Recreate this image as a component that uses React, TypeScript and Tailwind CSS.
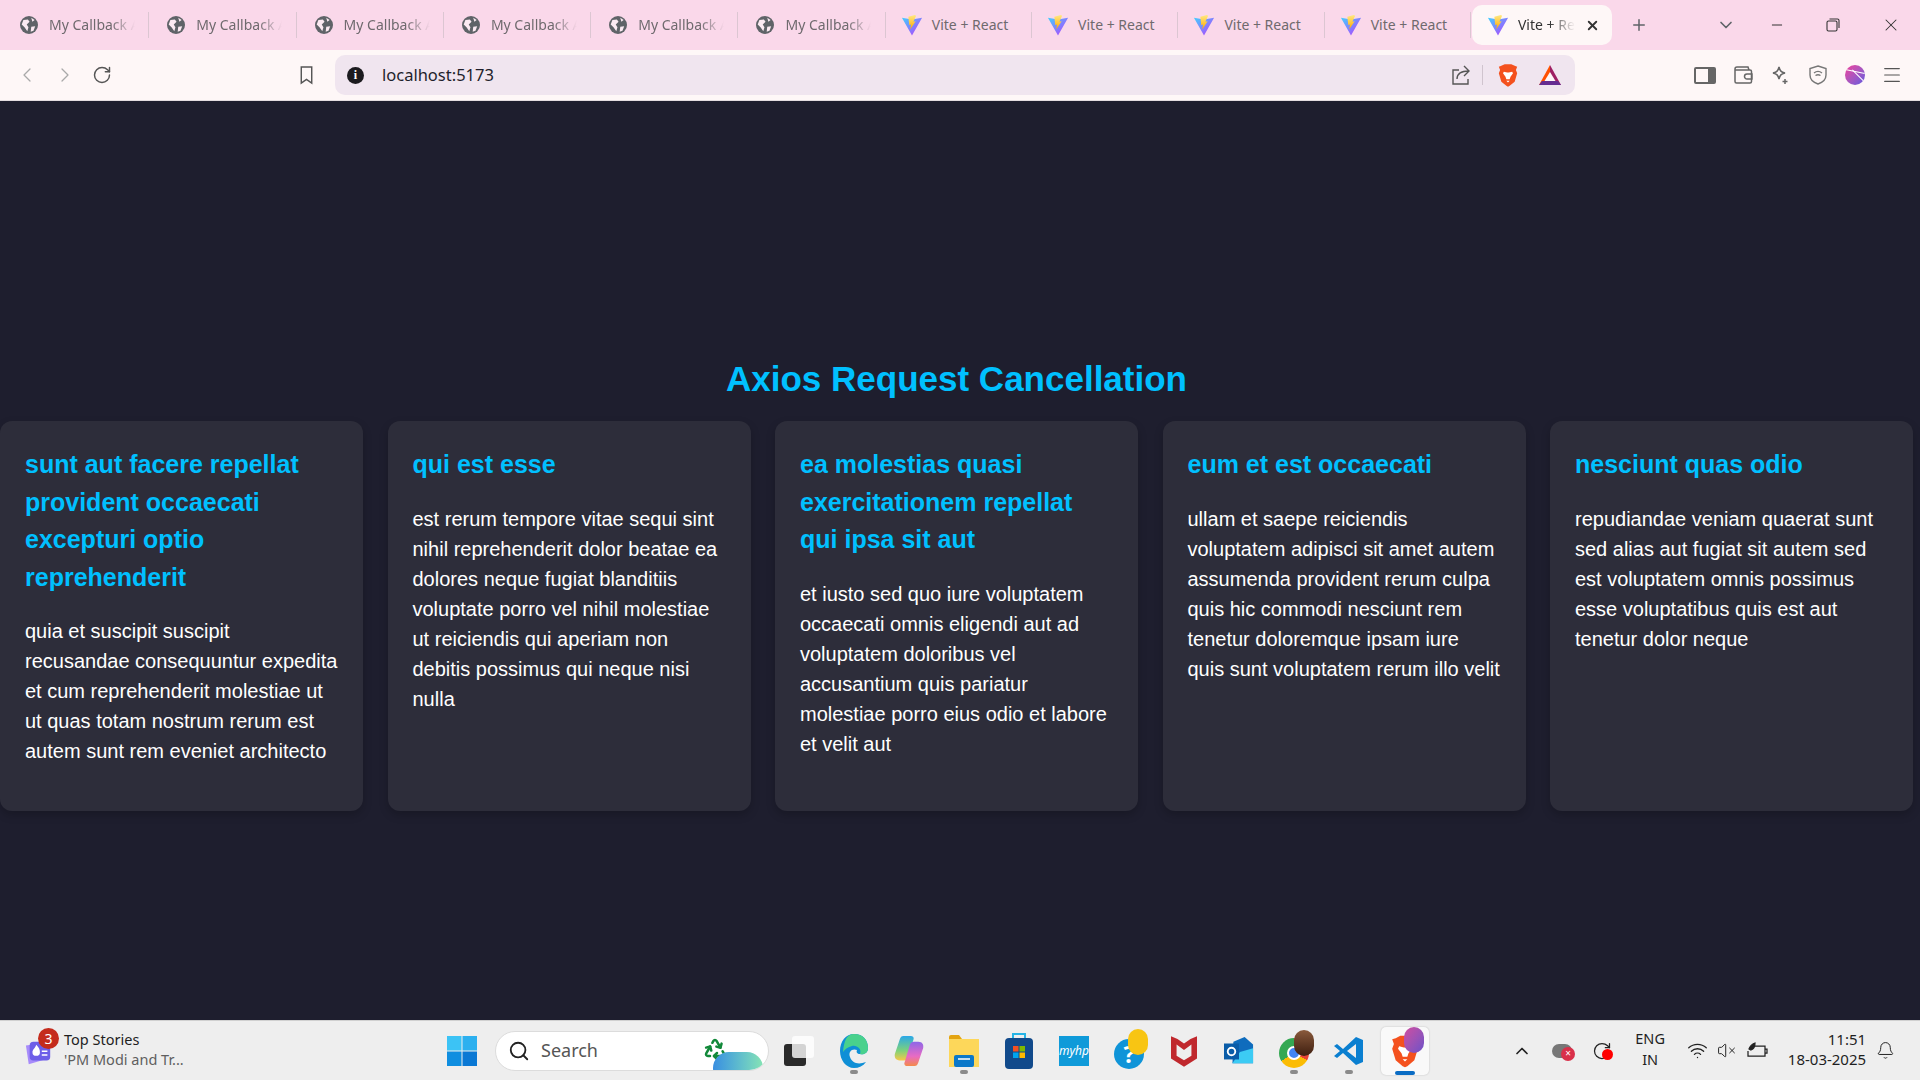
import { Bell, ChevronDown, ChevronLeft, ChevronRight, ChevronUp, Menu, Minus, Plus, Recycle, RotateCw, Search, VolumeX, Wifi, X } from "lucide-react";

const posts = [
  {
    title: "sunt aut facere repellat provident occaecati excepturi optio reprehenderit",
    body: "quia et suscipit suscipit recusandae consequuntur expedita et cum reprehenderit molestiae ut ut quas totam nostrum rerum est autem sunt rem eveniet architecto",
  },
  {
    title: "qui est esse",
    body: "est rerum tempore vitae sequi sint nihil reprehenderit dolor beatae ea dolores neque fugiat blanditiis voluptate porro vel nihil molestiae ut reiciendis qui aperiam non debitis possimus qui neque nisi nulla",
  },
  {
    title: "ea molestias quasi exercitationem repellat qui ipsa sit aut",
    body: "et iusto sed quo iure voluptatem occaecati omnis eligendi aut ad voluptatem doloribus vel accusantium quis pariatur molestiae porro eius odio et labore et velit aut",
  },
  {
    title: "eum et est occaecati",
    body: "ullam et saepe reiciendis voluptatem adipisci sit amet autem assumenda provident rerum culpa quis hic commodi nesciunt rem tenetur doloremque ipsam iure quis sunt voluptatem rerum illo velit",
  },
  {
    title: "nesciunt quas odio",
    body: "repudiandae veniam quaerat sunt sed alias aut fugiat sit autem sed est voluptatem omnis possimus esse voluptatibus quis est aut tenetur dolor neque",
  },
];

function GlobeIcon() {
  return (
    <svg viewBox="0 0 16 16" className="w-[18px] h-[18px] shrink-0">
      <circle cx="8" cy="8" r="8" fill="#5f6368" />
      <path d="M3 3.5 7 3l1.5 2L6 7.5l1.5 2.5-1 3.5L4 10 1.5 7.5ZM10 9.5l3.5-.5-1.5 4-2.500 1ZM10 1.500l3 2-2 1.500Z" fill="#fbeaf2" />
    </svg>
  );
}

function ViteIcon() {
  return (
    <svg viewBox="0 0 24 24" className="w-[22px] h-[22px] shrink-0">
      <defs>
        <linearGradient id="viteBody" x1="0" y1="0" x2="1" y2="1">
          <stop offset="0" stopColor="#41d1ff" />
          <stop offset="1" stopColor="#bd34fe" />
        </linearGradient>
        <linearGradient id="viteBolt" x1="0" y1="0" x2="0" y2="1">
          <stop offset="0" stopColor="#ffea83" />
          <stop offset="1" stopColor="#ffa800" />
        </linearGradient>
      </defs>
      <path d="M1 4 12 6l11-2-11 19.500Z" fill="url(#viteBody)" />
      <path d="M15 1 8 3l1 9 2-.5-1 5.500 6-9-2.500.5L16.500 2Z" fill="url(#viteBolt)" />
    </svg>
  );
}

function Tab({ label, icon }: { label: string; icon: "globe" | "vite" }) {
  return (
    <div className={`flex items-center h-[26px] border-r border-[#dcc6d2] overflow-hidden ${icon === "globe" ? "w-[147.300px] pl-[18px] gap-[11px]" : "w-[146.300px] pl-[15px] gap-[9px]"}`}>
      {icon === "globe" ? <GlobeIcon /> : <ViteIcon />}
      <span className={`-mt-[2px] text-[14px] text-[#6f6a6e] whitespace-nowrap ${icon === "globe" ? "w-[86px] overflow-hidden [mask-image:linear-gradient(to_right,black_72%,transparent)]" : ""}`}>{label}</span>
    </div>
  );
}

function BraveIcon({ size }: { size: string }) {
  return (
    <svg viewBox="0 0 24 28" className={size}>
      <path d="M4 3 8 1h8l4 2 3 1-1.500 4L23 12l-3 10-6 5-2 1-2-1-6-5L1 12l1.500-4L1 4Z" fill="#f4511e" />
      <path d="M7 10l4 1h2l4-1 1 2-3 4-1 3h-4l-1-3-3-4ZM10 21h4l-2 2Z" fill="#fff" />
    </svg>
  );
}

function BatIcon() {
  return (
    <svg viewBox="0 0 24 22" className="w-[24px] h-[22px]">
      <path d="M12 1 23 21h-7l-4-7Z" fill="#9e1f63" />
      <path d="M12 1 1 21h7l4-7Z" fill="#ff5000" />
      <path d="M1 21h22l-3-4H4Z" fill="#662d91" />
      <path d="M12 8 6.500 17h11Z" fill="#fef7f7" />
    </svg>
  );
}

function ChromeBar() {
  return (
    <div className="shrink-0">
      <div className="h-[50px] bg-[#fad8ea] flex items-center pl-[2px]">
        {[0, 1, 2, 3, 4, 5].map((i) => (
          <Tab key={i} label="My Callback App" icon="globe" />
        ))}
        {[0, 1, 2, 3].map((i) => (
          <Tab key={i} label="Vite + React" icon="vite" />
        ))}
        <div className="ml-[1px] w-[140px] h-[40px] bg-[#fef7f7] rounded-[10px] flex items-center pl-[15px]">
          <ViteIcon />
          <span className="-mt-[2px] ml-[9px] text-[14px] text-[#333] whitespace-nowrap w-[57px] overflow-hidden [mask-image:linear-gradient(to_right,black_55%,transparent)]">Vite + React</span>
          <X size={15} strokeWidth={3} className="ml-[10px] shrink-0 text-[#333]" />
        </div>
        <Plus size={18} strokeWidth={2} className="ml-[18px] text-[#5f6368]" />
        <ChevronDown size={20} className="ml-[68px] text-[#5f6368]" />
        <Minus size={16} strokeWidth={1.500} className="ml-[33px] text-[#333]" />
        <svg viewBox="0 0 14 14" className="ml-[41px] w-[14px] h-[14px] text-[#333]" fill="none" stroke="currentColor" strokeWidth="1.100">
          <rect x="1" y="3" width="10" height="10" rx="1.500" />
          <path d="M3.500 1H11.500a1.500 1.500 0 0 1 1.500 1.500V10" />
        </svg>
        <X size={20} strokeWidth={1.250} className="ml-[41px] text-[#333]" />
      </div>
      <div className="h-[51px] bg-[#fef7f7] border-b border-[#e4dde0] flex items-center">
        <ChevronLeft size={24} strokeWidth={1.250} className="ml-[15px] text-[#a9a9a9]" />
        <ChevronRight size={24} strokeWidth={1.250} className="ml-[14px] text-[#a9a9a9]" />
        <RotateCw size={20} strokeWidth={1.750} className="ml-[15px] text-[#555]" />
        <svg viewBox="0 0 14 20" className="ml-[187px] w-[15px] h-[19px] text-[#555]" fill="none" stroke="currentColor" strokeWidth="1.500">
          <path d="M1.500 1h11v17L7 14l-5.500 4Z" />
        </svg>
        <div className="ml-[21px] w-[1240px] h-[40px] bg-[#f0e5ef] rounded-[10px] flex items-center pl-[12px] pr-[13px]">
          <div className="w-[17px] h-[17px] shrink-0 rounded-full bg-[#1c1b1f] text-white text-[12px] font-bold flex items-center justify-center font-['Liberation_Serif',serif]">i</div>
          <span className="ml-[18px] flex-1 text-[16.500px] text-[#1f1f2b]">localhost:5173</span>
          <svg viewBox="0 0 20 20" className="w-[20px] h-[22px] shrink-0 text-[#555]" fill="none" stroke="currentColor" strokeWidth="1.400">
            <path d="M8 5H2v14h15v-5M6 14c0-5 4-8 12-8M13 1l5 5-5 5" />
          </svg>
          <div className="ml-[11px] w-px h-[20px] bg-[#d0c4ce]" />
          <div className="ml-[15px]">
            <BraveIcon size="w-[20px] h-[24px]" />
          </div>
          <div className="ml-[20px]">
            <BatIcon />
          </div>
        </div>
        <div className="ml-[119px] w-[22px] h-[17px] border-2 border-[#666] rounded-[2px] flex justify-end">
          <div className="w-[6px] bg-[#666]" />
        </div>
        <svg viewBox="0 0 20 18" className="ml-[17px] w-[20px] h-[18px] text-[#666]" fill="none" stroke="currentColor" strokeWidth="1.500">
          <path d="M2 4V3a2 2 0 0 1 2-2h11l1 3M2 4h15a1.500 1.500 0 0 1 1.500 1.500v10a1.500 1.500 0 0 1-1.500 1.500H3.500A1.500 1.500 0 0 1 2 15.500ZM19 8h-5a2 2 0 0 0 0 5h5Z" />
        </svg>
        <svg viewBox="0 0 20 20" className="ml-[17px] w-[20px] h-[20px] text-[#666]" fill="none" stroke="currentColor" strokeWidth="1.500">
          <path d="M9 2c1 4 2 5 6 6-4 1-5 2-6 6-1-4-2-5-6-6 4-1 5-2 6-6Z" />
          <path d="M15 14v5M12.500 16.500h5" />
        </svg>
        <svg viewBox="0 0 18 20" className="ml-[19px] w-[18px] h-[20px] text-[#777]" fill="none" stroke="currentColor" strokeWidth="1.400">
          <path d="M9 1 17 3.500V10c0 4.500-3.500 7.500-8 9-4.500-1.500-8-4.500-8-9V3.500Z" />
          <path d="M5 8c2.500-2 5.500-2 8 0M6.500 10.500c1.500-1 3.500-1 5 0M9 13h.01" />
        </svg>
        <div className="ml-[18px] w-[20px] h-[20px] rounded-full bg-gradient-to-br from-[#f0379a] to-[#5f56e0] relative overflow-hidden">
          <div className="absolute left-0 top-[6px] w-[20px] h-px bg-white rotate-12" />
          <div className="absolute left-[5px] top-[10px] w-[16px] h-px bg-white rotate-45" />
        </div>
        <Menu size={22} strokeWidth={1.250} className="ml-[16px] text-[#555]" />
      </div>
    </div>
  );
}

function PostsPage() {
  return (
    <main className="flex-1 min-h-0 bg-[#1e1e2e] pt-[255px] pr-[7px] font-['Liberation_Sans',Arial,sans-serif]">
      <h1 className="text-[35px] leading-[46px] font-bold text-[#00c0ff] text-center mb-[19px]">Axios Request Cancellation</h1>
      <div className="grid grid-cols-5 gap-[24.500px]">
        {posts.map((post) => (
          <div key={post.title} className="bg-[#2d2d3a] rounded-[12px] px-[25px] pt-[25px] pb-[45px] shadow-[0_4px_10px_rgba(0,0,0,0.2)]">
            <h3 className="text-[25px] leading-[37.600px] font-bold text-[#00c0ff] mb-[20px]">{post.title}</h3>
            <p className="text-[20px] leading-[30px] text-white">{post.body}</p>
          </div>
        ))}
      </div>
    </main>
  );
}

function NewsIcon() {
  return (
    <div className="relative w-[30px] h-[34px]">
      <svg viewBox="0 0 30 30" className="absolute left-0 top-[6px] w-[30px] h-[28px]">
        <path d="M1 6l20-3 3 17-20 6Z" fill="#a78bfa" />
        <rect x="5" y="2" width="22" height="20" rx="4" fill="#6d5ee8" />
        <path d="M12 5c3 3 4 5 4 8a4 4 0 0 1-8 0c0-3 3-4 4-8Z" fill="#fff" />
        <path d="M18 12h6M18 16h6" stroke="#fff" strokeWidth="1.500" />
      </svg>
      <div className="absolute left-[14px] -top-[6px] w-[21px] h-[21px] rounded-full bg-[#c42b1c] text-white text-[14px] flex items-center justify-center">3</div>
    </div>
  );
}

function AppIcon({ dot, active, children }: { dot?: boolean; active?: boolean; children: React.ReactNode }) {
  return (
    <div className={`relative w-[48px] h-[48px] mx-[3.550px] flex items-center justify-center rounded-[5px] ${active ? "bg-[#f9f9f9] shadow-[0_0_2px_rgba(0,0,0,0.2)]" : ""}`}>
      {children}
      {dot && <div className="absolute bottom-[1px] left-[20px] w-[8px] h-[4px] rounded-full bg-[#8a8a8a]" />}
      {active && <div className="absolute bottom-0 left-[14px] w-[20px] h-[4px] rounded-full bg-[#0a6cc4]" />}
    </div>
  );
}

function Taskbar() {
  return (
    <div className="h-[60px] shrink-0 bg-[#eeeeee] border-t border-[#d0d0d0] flex items-center font-['Noto_Sans',sans-serif]">
      <div className="ml-[24px] w-[423px] flex items-center gap-[5px]">
        <NewsIcon />
        <div className="leading-[20px] ml-[5px] -mt-[4px]">
          <div className="text-[14.500px] text-[#1f1f1f]">Top Stories</div>
          <div className="text-[14.500px] text-[#5f5f5f]">'PM Modi and Tr...</div>
        </div>
      </div>
      <svg viewBox="0 0 30 30" className="w-[30px] h-[30px]">
        <rect x="0" y="0" width="14.500" height="14.500" fill="#3cc3f5" />
        <rect x="15.500" y="0" width="14.500" height="14.500" fill="#2cb0ef" />
        <rect x="0" y="15.500" width="14.500" height="14.500" fill="#0f8ee0" />
        <rect x="15.500" y="15.500" width="14.500" height="14.500" fill="#0a78d4" />
      </svg>
      <div className="relative ml-[18px] w-[274px] h-[40px] bg-white rounded-full border border-[#dcdcdc] flex items-center pl-[12px] overflow-hidden">
        <Search size={22} strokeWidth={2} className="text-[#222]" />
        <span className="ml-[11px] text-[18px] text-[#555]">Search</span>
        <Recycle size={24} strokeWidth={2.500} className="absolute left-[207px] top-[5px] text-[#12893a]" />
        <div className="absolute right-[5px] -bottom-[14px] w-[50px] h-[32px] rounded-full bg-gradient-to-r from-[#3a8ee0] to-[#86e3b4]" />
      </div>
      <div className="ml-[2px] flex items-center">
        <AppIcon>
          <div className="relative w-[30px] h-[30px]">
            <div className="absolute left-0 bottom-0 w-[22px] h-[22px] rounded-[3px] bg-[#2a2a2a]" />
            <div className="absolute right-0 top-0 w-[22px] h-[22px] rounded-[3px] bg-white/80" />
          </div>
        </AppIcon>
        <AppIcon dot>
          <svg viewBox="0 0 30 36" className="w-[30px] h-[36px]">
            <path d="M15 1c9 0 14 6 14 14 0 5-4 7-8 6-3 0-4-2-3-4-5-2-9 2-7 7 2 6 8 8 16 5-3 4-7 6-12 6C7 35 1 27 1 18 1 8 7 1 15 1Z" fill="#0f8fd6" />
            <path d="M15 1c9 0 14 6 14 14 0 5-4 7-8 6 2-5-3-9-8-8-4 1-7 3-9 6C5 9 7 1 15 1Z" fill="#49d18c" />
          </svg>
        </AppIcon>
        <AppIcon>
          <svg viewBox="0 0 32 34" className="w-[30px] h-[34px]">
            <defs>
              <linearGradient id="copilotLeft" x1="0" y1="0" x2="0" y2="1">
                <stop offset="0" stopColor="#2aa8e8" />
                <stop offset="0.600" stopColor="#7ed27a" />
                <stop offset="1" stopColor="#f7c948" />
              </linearGradient>
              <linearGradient id="copilotRight" x1="0" y1="0" x2="0" y2="1">
                <stop offset="0" stopColor="#8c67e8" />
                <stop offset="0.600" stopColor="#e86bc4" />
                <stop offset="1" stopColor="#f48a4a" />
              </linearGradient>
            </defs>
            <path d="M10 1h8c2 0 3 1 3 3l-6 20c-1 2-2 3-4 3H6c-4 0-6-3-5-7L6 5c1-3 2-4 4-4Z" fill="url(#copilotLeft)" />
            <path d="M22 33h-8c-2 0-3-1-3-3l6-20c1-2 2-3 4-3h5c4 0 6 3 5 7l-5 15c-1 3-2 4-4 4Z" fill="url(#copilotRight)" />
          </svg>
        </AppIcon>
        <AppIcon dot>
          <svg viewBox="0 0 30 32" className="w-[30px] h-[32px]">
            <path d="M0 2a2 2 0 0 1 2-2h8l3 4H0Z" fill="#e3a412" />
            <rect x="0" y="4" width="30" height="28" fill="#fdd75a" />
            <rect x="5" y="20" width="20" height="12" rx="2" fill="#0b78c9" />
            <path d="M9 24h12" stroke="#fff" strokeWidth="1.500" />
          </svg>
        </AppIcon>
        <AppIcon>
          <svg viewBox="0 0 28 36" className="w-[28px] h-[36px]">
            <path d="M8 5V1h12v4" fill="none" stroke="#25b4e6" strokeWidth="2" />
            <rect x="0" y="5" width="28" height="31" rx="4" fill="#114a8b" />
            <rect x="8" y="13" width="5.500" height="5.500" fill="#f25022" />
            <rect x="14.500" y="13" width="5.500" height="5.500" fill="#7fba00" />
            <rect x="8" y="19.500" width="5.500" height="5.500" fill="#00a4ef" />
            <rect x="14.500" y="19.500" width="5.500" height="5.500" fill="#ffb900" />
          </svg>
        </AppIcon>
        <AppIcon>
          <div className="w-[30px] h-[30px] bg-[#0f9ad9] flex items-center justify-center text-white text-[12px] italic">myhp</div>
        </AppIcon>
        <AppIcon>
          <div className="relative w-[30px] h-[30px] mt-[6px] rounded-full bg-[#0f94d8] flex items-center justify-center text-white text-[24px] font-bold">
            ?
            <div className="absolute left-[14px] -top-[10px] w-[20px] h-[26px] rounded-full bg-[#f8c513]" />
          </div>
        </AppIcon>
        <AppIcon>
          <svg viewBox="0 0 28 36" className="w-[26px] h-[34px]">
            <path d="M0 2l7 3 7 5 7-5 7-3v24l-14 9-14-9Z" fill="#c0282d" />
            <path d="M6 11l8 6 8-6v12l-8 5-8-5Z" fill="#eee" />
          </svg>
        </AppIcon>
        <AppIcon>
          <svg viewBox="0 0 32 30" className="w-[30px] h-[30px]">
            <path d="M10 5 22 0l9 8v20H9Z" fill="#0f6cbd" />
            <path d="M31 12v16H9l8-12Z" fill="#3ccbf4" />
            <rect x="0" y="7" width="16" height="17" fill="#0a5ca8" />
            <circle cx="8" cy="15.500" r="4" fill="none" stroke="#fff" strokeWidth="2" />
          </svg>
        </AppIcon>
        <AppIcon dot>
          <div className="relative w-[30px] h-[30px] mt-[4px]">
            <div className="w-[30px] h-[30px] rounded-full bg-[conic-gradient(#ea4335_0_33%,#fbbc04_33%_66%,#34a853_66%)] flex items-center justify-center">
              <div className="w-[14px] h-[14px] rounded-full bg-[#4285f4] border-2 border-white" />
            </div>
            <div className="absolute left-[15px] -top-[8px] w-[20px] h-[26px] rounded-full bg-gradient-to-b from-[#8a5a3c] to-[#3f1f10]" />
          </div>
        </AppIcon>
        <AppIcon dot>
          <svg viewBox="0 0 30 30" className="w-[30px] h-[30px]">
            <path d="M22 1l7 3v22l-7 3L9 17l-6 5-3-2 6-5-6-5 3-2 6 5Z" fill="#0a7fd0" />
            <path d="M22 8v14l-9-7Z" fill="#eeeeee" />
          </svg>
        </AppIcon>
        <AppIcon active>
          <div className="relative">
            <BraveIcon size="w-[28px] h-[34px]" />
            <div className="absolute left-[13px] -top-[7px] w-[20px] h-[26px] rounded-full bg-gradient-to-br from-[#d04aa0] to-[#6b4fc8]" />
          </div>
        </AppIcon>
      </div>
      <ChevronUp size={20} strokeWidth={2} className="ml-[80px] text-[#222]" />
      <div className="relative ml-[20px] w-[20px] h-[14px] rounded-full bg-[#777]">
        <div className="absolute left-[9px] top-[3px] w-[14px] h-[14px] rounded-full bg-[#d9304a] text-white text-[10px] flex items-center justify-center">×</div>
      </div>
      <div className="relative ml-[20px] w-[20px] h-[20px]">
        <RotateCw size={20} strokeWidth={1.500} className="text-[#222]" />
        <div className="absolute left-[10px] top-[8px] w-[11px] h-[11px] rounded-full bg-[#ff0000]" />
      </div>
      <div className="ml-[20px] w-[36px] -mt-[3px] text-center text-[14.500px] leading-[21px] text-[#1f1f1f]">
        <div>ENG</div>
        <div>IN</div>
      </div>
      <Wifi size={21} strokeWidth={1.500} className="ml-[19px] text-[#222]" />
      <VolumeX size={19} strokeWidth={1.250} className="ml-[9px] text-[#222]" />
      <svg viewBox="0 0 22 18" className="ml-[10px] w-[22px] h-[18px] text-[#222]" fill="none" stroke="currentColor" strokeWidth="1.250">
        <path d="M6 4h13v10H2V9M19 7h2v4h-2" />
        <path d="M3 7c1-3 3-5 6-6 0 3-1 6-4 7Z" fill="currentColor" />
      </svg>
      <div className="ml-[12px] w-[86px] -mt-[4px] text-right text-[15px] leading-[20px] text-[#1f1f1f]">
        <div>11:51</div>
        <div>18-03-2025</div>
      </div>
      <Bell size={19} strokeWidth={1.250} className="ml-[10px] text-[#222]" />
    </div>
  );
}

export default function App() {
  return (
    <div className="w-[1920px] h-[1080px] flex flex-col overflow-hidden font-['Noto_Sans',sans-serif]">
      <ChromeBar />
      <PostsPage />
      <Taskbar />
    </div>
  );
}
